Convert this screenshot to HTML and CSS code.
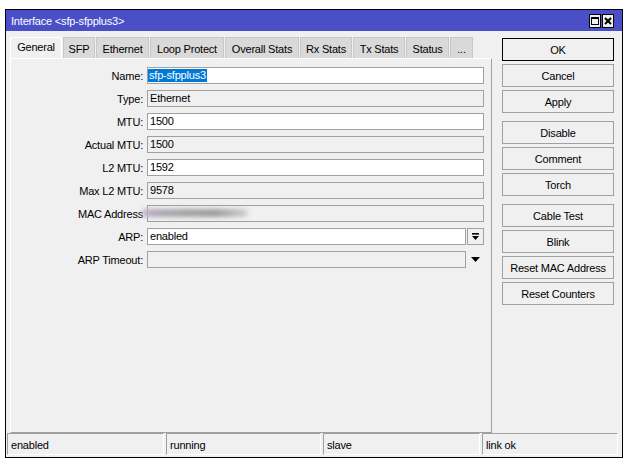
FILE: index.html
```html
<!DOCTYPE html>
<html>
<head>
<meta charset="utf-8">
<link rel="stylesheet" href="styles.css">
</head>
<body>
<div class="window">
  <div class="titlebar">
    <span class="title">Interface &lt;sfp-sfpplus3&gt;</span>
    <div class="tb-btns">
      <span class="tb-btn"><svg width="10" height="12" viewBox="0 0 10 12"><rect x="1.5" y="2.5" width="7" height="7" fill="none" stroke="#000"/><rect x="1" y="2" width="8" height="2" fill="#000"/></svg></span>
      <span class="tb-btn"><svg width="10" height="12" viewBox="0 0 10 12"><path d="M2 3L8 9M8 3L2 9" stroke="#000" stroke-width="2"/></svg></span>
    </div>
  </div>
  <div class="main">
    <div class="left">
      <div class="tabs">
        <div class="tab active w-general">General</div>
        <div class="tab w-sfp">SFP</div>
        <div class="tab w-eth">Ethernet</div>
        <div class="tab w-loop">Loop Protect</div>
        <div class="tab w-overall">Overall Stats</div>
        <div class="tab w-rx">Rx Stats</div>
        <div class="tab w-tx">Tx Stats</div>
        <div class="tab w-status">Status</div>
        <div class="tab w-more">...</div>
      </div>
      <div class="panel">
        <div class="form">
          <div class="label">Name:</div>
          <div class="field name"><span class="sel">sfp-sfpplus3</span></div>
          <div class="label">Type:</div>
          <div class="field ro">Ethernet</div>
          <div class="label">MTU:</div>
          <div class="field">1500</div>
          <div class="label">Actual MTU:</div>
          <div class="field ro">1500</div>
          <div class="label">L2 MTU:</div>
          <div class="field">1592</div>
          <div class="label">Max L2 MTU:</div>
          <div class="field ro">9578</div>
          <div class="label">MAC Address</div>
          <div class="field ro mac"><span class="smudge"></span></div>
          <div class="label">ARP:</div>
          <div class="combo">
            <div class="field">enabled</div>
            <div class="ddbtn"><svg width="9" height="8" viewBox="0 0 9 8"><rect x="1" y="0" width="7" height="1.6" fill="#000"/><path d="M1 3h7l-3.5 4z" fill="#000"/></svg></div>
          </div>
          <div class="label">ARP Timeout:</div>
          <div class="combo">
            <div class="field ro"></div>
            <div class="ddarrow"><svg width="9" height="5" viewBox="0 0 9 5"><path d="M0 0h9l-4.5 5z" fill="#000"/></svg></div>
          </div>
        </div>
      </div>
    </div>
    <div class="buttons">
      <div class="btn default">OK</div>
      <div class="btn">Cancel</div>
      <div class="btn">Apply</div>
      <div class="btn group">Disable</div>
      <div class="btn">Comment</div>
      <div class="btn">Torch</div>
      <div class="btn group">Cable Test</div>
      <div class="btn">Blink</div>
      <div class="btn">Reset MAC Address</div>
      <div class="btn">Reset Counters</div>
    </div>
  </div>
  <div class="statusbar">
    <div class="sp s1">enabled</div>
    <div class="sp s2">running</div>
    <div class="sp s3">slave</div>
    <div class="sp s4">link ok</div>
  </div>
</div>
</body>
</html>
```
FILE: styles.css
```css
body {
  margin: 0;
  padding: 9px 0 0 5px;
  background: #fff;
  font-family: "Liberation Sans", Arial, sans-serif;
  font-size: 11px;
  letter-spacing: -0.2px;
  color: #000;
}
.window {
  width: 618px;
  height: 449px;
  box-sizing: border-box;
  border: 1px solid #000;
  background: #f0f0f0;
  display: flex;
  flex-direction: column;
}
.titlebar {
  height: 21px;
  flex: none;
  background: #4b4fc7;
  color: #fff;
  display: flex;
  align-items: center;
  justify-content: space-between;
  padding: 0 8px 0 5px;
  font-size: 11px;
}
.tb-btns {
  display: flex;
  gap: 1px;
}
.tb-btn {
  width: 12px;
  height: 14px;
  box-sizing: border-box;
  border: 1px solid #000;
  background: #f0f0f0;
  display: flex;
  align-items: center;
  justify-content: center;
}
.main {
  flex: 1;
  display: flex;
  gap: 10px;
  padding: 6px 8px 0 4px;
}
.left {
  width: 482px;
  display: flex;
  flex-direction: column;
}
.tabs {
  height: 21px;
  display: flex;
  gap: 1px;
}
.tab {
  box-sizing: border-box;
  display: flex;
  align-items: center;
  justify-content: center;
  background: #d9d9d9;
  border: 1px solid #c8c8c8;
  border-bottom: 0;
  white-space: nowrap;
  padding-top: 1px;
}
.tab.active {
  background: #f0f0f0;
  border-color: #fff;
  padding-top: 0;
  padding-bottom: 2px;
}
.w-general { width: 52px; }
.w-sfp { width: 32px; }
.w-eth { width: 53px; }
.w-loop { width: 74px; }
.w-overall { width: 74px; }
.w-rx { width: 52px; }
.w-tx { width: 52px; }
.w-status { width: 43px; }
.w-more { width: 23px; }
.panel {
  flex: 1;
  border: 1px solid;
  border-color: #fff #a0a0a0 #a0a0a0 #fff;
}
.form {
  display: grid;
  grid-template-columns: 132px 337px;
  column-gap: 4px;
  row-gap: 6px;
  padding: 8px 7px 0 0;
  align-items: center;
}
.label {
  text-align: right;
  white-space: nowrap;
}
.field {
  position: relative;
  height: 17px;
  box-sizing: border-box;
  border: 1px solid #a0a0a0;
  background: #fff;
  padding-left: 2px;
  line-height: 15px;
}
.field.ro {
  background: #f0f0f0;
}
.field.name {
  padding-left: 0;
}
.sel {
  display: inline-block;
  height: 13px;
  line-height: 13px;
  margin-top: 1px;
  padding: 0 1px;
  background: #0078d7;
  color: #fff;
  vertical-align: top;
}
.smudge {
  position: absolute;
  left: -6px;
  top: 3px;
  width: 106px;
  height: 8px;
  border-radius: 4px;
  background: linear-gradient(90deg, #c4b3cf 0%, #b0a9b8 15%, #a4a4a4 40%, #9d9d9d 70%, #d2d2d2 100%);
  filter: blur(2px);
}
.combo {
  display: flex;
  gap: 1px;
}
.combo .field {
  width: 319px;
}
.ddbtn, .ddarrow {
  width: 17px;
  height: 17px;
  box-sizing: border-box;
  display: flex;
  align-items: center;
  justify-content: center;
}
.ddbtn {
  border: 1px solid #a0a0a0;
  background: #f0f0f0;
}
.buttons {
  width: 112px;
  display: flex;
  flex-direction: column;
  gap: 3px;
  padding-top: 1px;
}
.btn {
  height: 23px;
  box-sizing: border-box;
  border: 1px solid #a0a0a0;
  background: #f0f0f0;
  display: flex;
  align-items: center;
  justify-content: center;
  white-space: nowrap;
}
.btn.default {
  border-color: #000;
}
.btn.group {
  margin-top: 5px;
}
.statusbar {
  flex: none;
  display: flex;
  gap: 2px;
  height: 24px;
  box-sizing: border-box;
  padding: 0 0 2px 1px;
}
.sp {
  height: 22px;
  box-sizing: border-box;
  border: 1px solid;
  border-color: #a0a0a0 #fff #fff #a0a0a0;
  padding: 1px 0 0 3px;
  display: flex;
  align-items: center;
}
.s1 { width: 157px; }
.s2 { width: 155px; }
.s3 { width: 157px; }
.s4 { width: 136px; }
```
